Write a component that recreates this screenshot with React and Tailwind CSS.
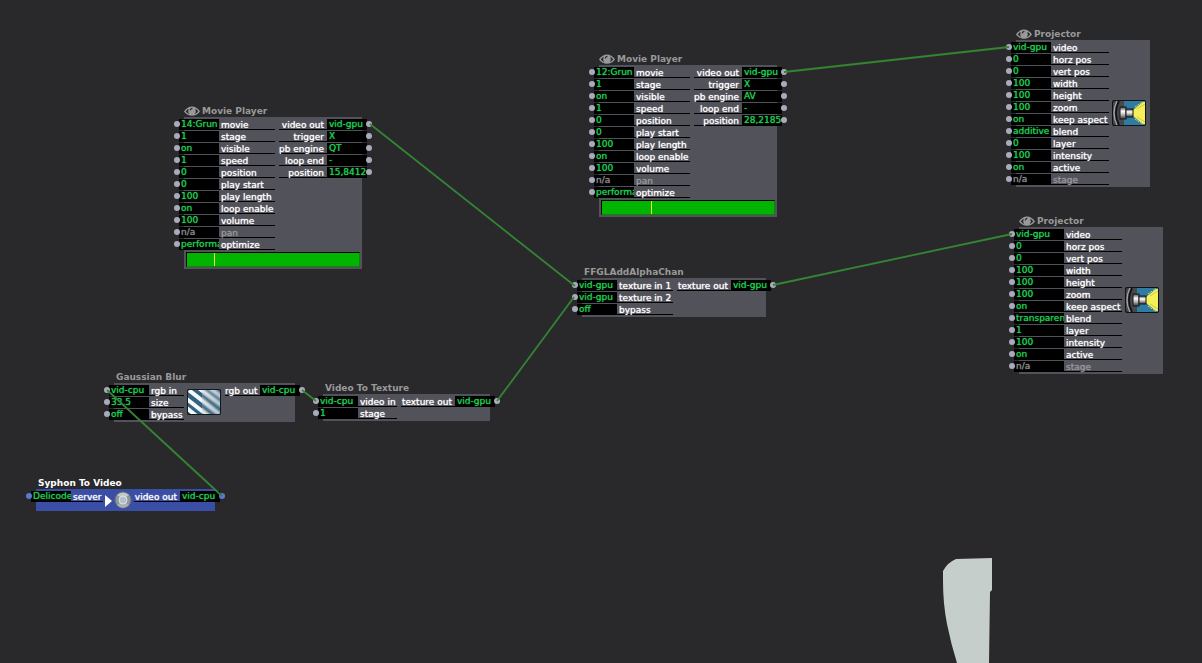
import React from "react";

const moviePorts = (movie) => [
  { label: "movie", value: movie },
  { label: "stage", value: "1" },
  { label: "visible", value: "on" },
  { label: "speed", value: "1" },
  { label: "position", value: "0" },
  { label: "play start", value: "0" },
  { label: "play length", value: "100" },
  { label: "loop enable", value: "on" },
  { label: "volume", value: "100" },
  { label: "pan", value: "n/a", disabled: true },
  { label: "optimize", value: "performance" },
];

const movieOutputs = (engine, position) => [
  { label: "video out", value: "vid-gpu", wired: true },
  { label: "trigger", value: "X" },
  { label: "pb engine", value: engine },
  { label: "loop end", value: "-" },
  { label: "position", value: position },
];

const projectorPorts = (blend, layer) => [
  { label: "video", value: "vid-gpu", wired: true },
  { label: "horz pos", value: "0" },
  { label: "vert pos", value: "0" },
  { label: "width", value: "100" },
  { label: "height", value: "100" },
  { label: "zoom", value: "100" },
  { label: "keep aspect", value: "on" },
  { label: "blend", value: blend },
  { label: "layer", value: layer },
  { label: "intensity", value: "100" },
  { label: "active", value: "on" },
  { label: "stage", value: "n/a", disabled: true },
];

const nodes = [
  {
    id: "movie-14",
    title: "Movie Player",
    eye: true,
    place: "left-[184px] top-[103px] w-[178px]",
    inputs: moviePorts("14:Grun"),
    outputs: movieOutputs("QT", "15,8412"),
    labelWidth: "w-[56px]",
    outWidth: "w-[48px]",
    progress: 15.8412,
  },
  {
    id: "movie-12",
    title: "Movie Player",
    eye: true,
    place: "left-[599px] top-[51px] w-[178px]",
    inputs: moviePorts("12:Grun"),
    outputs: movieOutputs("AV", "28,2185"),
    labelWidth: "w-[56px]",
    outWidth: "w-[48px]",
    progress: 28.2185,
  },
  {
    id: "projector-a",
    title: "Projector",
    eye: true,
    place: "left-[1016px] top-[26px] w-[134px]",
    inputs: projectorPorts("additive", "0"),
    labelWidth: "w-[58px]",
    icon: <ProjectorIcon />,
    iconPlace: "mt-[58px] ml-[3px]",
  },
  {
    id: "projector-b",
    title: "Projector",
    eye: true,
    place: "left-[1019px] top-[213px] w-[144px]",
    inputs: projectorPorts("transparent", "1"),
    labelWidth: "w-[58px]",
    valueWidth: "w-[50px]",
    icon: <ProjectorIcon />,
    iconPlace: "mt-[58px] ml-[3px]",
  },
  {
    id: "ffgl",
    title: "FFGLAddAlphaChan",
    place: "left-[582px] top-[264px] w-[184px]",
    inputs: [
      { label: "texture in 1", value: "vid-gpu", wired: true },
      { label: "texture in 2", value: "vid-gpu", wired: true },
      { label: "bypass", value: "off" },
    ],
    outputs: [{ label: "texture out", value: "vid-gpu", wired: true }],
    labelWidth: "w-[56px]",
    outWidth: "w-[54px]",
  },
  {
    id: "blur",
    title: "Gaussian Blur",
    place: "left-[114px] top-[369px] w-[181px]",
    inputs: [
      { label: "rgb in", value: "vid-cpu", wired: true },
      { label: "size", value: "33.5" },
      { label: "bypass", value: "off" },
    ],
    outputs: [{ label: "rgb out", value: "vid-cpu", wired: true }],
    labelWidth: "w-[35px]",
    outWidth: "w-[35px]",
    icon: <BlurIcon />,
    iconPlace: "mt-[4px] ml-[3px]",
  },
  {
    id: "texture",
    title: "Video To Texture",
    place: "left-[323px] top-[380px] w-[167px]",
    inputs: [
      { label: "video in", value: "vid-cpu", wired: true },
      { label: "stage", value: "1" },
    ],
    outputs: [{ label: "texture out", value: "vid-gpu", wired: true }],
    labelWidth: "w-[39px]",
    outWidth: "w-[54px]",
  },
  {
    id: "syphon",
    title: "Syphon To Video",
    place: "left-[36px] top-[475px] w-[179px]",
    selected: true,
    inputs: [{ label: "server", value: "Delicode" }],
    outputs: [{ label: "video out", value: "vid-cpu", wired: true }],
    labelWidth: "w-[32px]",
    outWidth: "w-[46px]",
    icon: <SyphonIcon />,
    iconPlace: "ml-[2px]",
  },
];

const wires = [
  [370, 124, 575, 286],
  [784, 72, 1009, 47],
  [773, 285, 1012, 234],
  [497, 401, 574, 297],
  [302, 390, 316, 401],
  [107, 390, 222, 496],
];

function EyeIcon() {
  return (
    <svg width="16" height="10" viewBox="0 0 16 10" aria-hidden="true">
      <path d="M0 5.4 Q3.5 0.4 8 0.4 Q12.5 0.4 16 5.4 Q12.5 9.8 8 9.8 Q3.5 9.8 0 5.4Z" fill="#999" />
      <path d="M1.8 5.6 Q3.2 3.6 4.6 2.8 Q3.6 5.6 5.2 8.2 Q3.2 7.4 1.8 5.6Z" fill="#29292b" />
      <path d="M14.2 5.6 Q12.8 3.6 11.4 2.8 Q12.4 5.6 10.8 8.2 Q12.8 7.4 14.2 5.6Z" fill="#29292b" />
      <path d="M6.2 4.4 Q6.4 2.6 8.4 2.4" fill="none" stroke="#29292b" strokeWidth="1.1" />
    </svg>
  );
}

function ProjectorIcon() {
  return (
    <svg width="34" height="26" viewBox="0 0 34 26" aria-hidden="true">
      <defs>
        <linearGradient id="lens" x1="0" y1="0" x2="0" y2="1">
          <stop offset="0" stopColor="#3c3c3c" />
          <stop offset="0.35" stopColor="#ffffff" />
          <stop offset="0.6" stopColor="#c4c4c4" />
          <stop offset="1" stopColor="#333" />
        </linearGradient>
      </defs>
      <rect x="0" y="0" width="34" height="26" rx="2" fill="#111214" />
      <rect x="11" y="1" width="22" height="24" fill="#2f7ba3" />
      <path d="M1 3 Q1 1 3 1 H12 V25 H3 Q1 25 1 23Z" fill="#48484c" />
      <path d="M5 1 Q2 7 2 13 Q2 19 5 25" fill="none" stroke="#a0a0a6" strokeWidth="1.4" />
      <path d="M7 1 Q4 7 4 13 Q4 19 7 25" fill="none" stroke="#121214" strokeWidth="1.8" />
      <path d="M21 10 L26 6 L31 2 H33 V24 H31 L26 20 L21 16Z" fill="#f5f057" />
      <path d="M23 7 L31 1.5 M23 19 L31 24.5" stroke="#d8d95a" strokeWidth="1" strokeDasharray="2 1" />
      <path d="M25 9 L33 4 M25 17 L33 22" stroke="#b8b94c" strokeWidth="0.7" />
      <rect x="8" y="7" width="6" height="12" fill="url(#lens)" stroke="#161616" />
      <rect x="14" y="9" width="7" height="8" fill="url(#lens)" stroke="#161616" />
    </svg>
  );
}

function BlurIcon() {
  return (
    <svg width="34" height="26" viewBox="0 0 34 26" aria-hidden="true">
      <defs>
        <clipPath id="blur-frame">
          <rect x="1" y="1" width="32" height="24" rx="2" />
        </clipPath>
        <linearGradient id="stripe" gradientUnits="userSpaceOnUse" x1="0" y1="0" x2="34" y2="0">
          <stop offset="0" stopColor="#fff" />
          <stop offset="0.4" stopColor="#f2f6f8" />
          <stop offset="1" stopColor="#b4c8d4" />
        </linearGradient>
        <filter id="soften">
          <feGaussianBlur stdDeviation="1" />
        </filter>
        <clipPath id="right-half">
          <rect x="15" y="0" width="19" height="26" />
        </clipPath>
      </defs>
      <rect x="0" y="0" width="34" height="26" rx="2" fill="#15191c" />
      <g clipPath="url(#blur-frame)">
        <rect x="1" y="1" width="32" height="24" fill="#31627f" />
        <g stroke="url(#stripe)" strokeWidth="4">
          <path d="M-4 16 L12 29 M-4 7 L24 29 M-2 -2 L36 28 M9 -3 L38 19 M20 -3 L40 12" />
        </g>
        <g clipPath="url(#right-half)">
          <g filter="url(#soften)">
            <rect x="13" y="-2" width="24" height="30" fill="#31627f" />
            <path d="M-4 7 L24 29 M-2 -2 L36 28 M9 -3 L38 19 M20 -3 L40 12" stroke="url(#stripe)" strokeWidth="4" />
          </g>
        </g>
      </g>
    </svg>
  );
}

function SyphonIcon() {
  return (
    <svg width="28" height="20" viewBox="0 0 28 20" aria-hidden="true">
      <path d="M0 4 L7 10 L0 16Z" fill="#fff" />
      <circle cx="18" cy="9" r="8" fill="#8f979b" stroke="#697075" />
      <path d="M12 4 Q18 -1 24 4 L21 6 Q18 4 15 6Z" fill="#c3c8ca" />
      <path d="M12 14 Q18 20 24 14 L21 12 Q18 14 15 12Z" fill="#a9b0b3" />
      <circle cx="18" cy="9" r="4" fill="#b4c0d0" stroke="#dfe3e6" />
    </svg>
  );
}

function Dot({ selected, side }) {
  return (
    <span
      className={`z-10 mt-[2px] size-[6px] shrink-0 rounded-full ${side === "left" ? "-mr-px" : "-ml-px"} ${
        selected ? "bg-[#5b78d6]" : "bg-[#aaaabd]"
      }`}
    />
  );
}

function InputPort({ node, port, index }) {
  const id = `${node.id}-in-${index}`;
  const valueWidth = node.valueWidth || "w-[40px]";
  return (
    <div className="flex h-[12px] items-start">
      <Dot side="left" selected={node.selected} />
      <input
        id={id}
        type="text"
        defaultValue={port.value}
        readOnly={port.wired}
        disabled={port.disabled}
        className={`block h-[11px] shrink-0 bg-black pb-px pl-[2px] leading-[10px] outline-none text-shadow-[0_0_1px_currentColor] ${valueWidth} ${
          port.disabled ? "text-[#8c8c8c]" : "text-[#1fcf50]"
        }`}
      />
      <label
        htmlFor={id}
        className={`block h-[11px] shrink-0 border-b border-black pt-px pl-[2px] leading-[10px] text-shadow-[0_0_1px_currentColor] ${node.labelWidth} ${
          port.disabled ? "text-[#97979c]" : "text-white"
        }`}
      >
        {port.label}
      </label>
    </div>
  );
}

function OutputPort({ node, port, index }) {
  const id = `${node.id}-out-${index}`;
  return (
    <div className="flex h-[12px] items-start">
      <label
        htmlFor={id}
        className={`block h-[11px] shrink-0 border-b border-black pt-px pr-[3px] text-right leading-[10px] text-white text-shadow-[0_0_1px_currentColor] ${node.outWidth}`}
      >
        {port.label}
      </label>
      <output
        id={id}
        className="block h-[11px] w-[40px] shrink-0 overflow-hidden bg-black pl-[2px] leading-[10px] text-[#1fcf50] text-shadow-[0_0_1px_currentColor]"
      >
        {port.value}
      </output>
      <Dot side="right" selected={node.selected} />
    </div>
  );
}

function Node({ node }) {
  return (
    <section className={`absolute ${node.place}`}>
      <h2
        className={`flex h-[14px] items-center pt-px font-bold leading-[12px] ${
          node.selected ? "text-white" : "text-[#999]"
        } ${node.eye ? "gap-[2px]" : "pl-[2px]"}`}
      >
        {node.eye && <EyeIcon />}
        {node.title}
      </h2>
      <div className={node.selected ? "bg-[#3a4ea6] pb-[8px]" : "bg-[#52525a] pb-px"}>
        <div className="flex items-start pt-[2px]">
          <div className="-ml-[10px]">
            {node.inputs.map((p, i) => (
              <InputPort key={i} node={node} port={p} index={i} />
            ))}
          </div>
          {node.icon && <div className={`-mb-[8px] shrink-0 ${node.iconPlace}`}>{node.icon}</div>}
          {node.outputs && (
            <div className="-mr-[10px] ml-auto">
              {node.outputs.map((p, i) => (
                <OutputPort key={i} node={node} port={p} index={i} />
              ))}
            </div>
          )}
        </div>
        {node.progress !== undefined && (
          <div className="relative mx-[2px] mt-px mb-px h-[15px] border border-b-[#088a08] border-l-black border-r-[#088a08] border-t-black bg-[#00b400]">
            <span className="absolute inset-y-0 w-px bg-[#f0f020]" style={{ left: `${node.progress}%` }} />
          </div>
        )}
      </div>
    </section>
  );
}

export default function App() {
  return (
    <main className="relative min-h-screen overflow-hidden bg-[#29292b] font-['DejaVu_Sans',Verdana,sans-serif] text-[9px] whitespace-nowrap">
      {/* stage output showing through the patch */}
      <svg className="absolute inset-0 h-full w-full" aria-hidden="true">
        <path d="M992 558 L956 559 Q948 562 943 571 V581 Q943 604 947 624 Q951 644 957 663 H989 L990 592 L992 590Z" fill="#c5cecb" />
      </svg>

      {nodes.map((n) => (
        <Node key={n.id} node={n} />
      ))}

      <svg className="pointer-events-none absolute inset-0 z-20 h-full w-full" aria-hidden="true">
        {wires.map(([x1, y1, x2, y2], i) => (
          <line key={i} x1={x1} y1={y1} x2={x2} y2={y2} stroke="#348434" strokeWidth="1.8" />
        ))}
      </svg>
    </main>
  );
}
